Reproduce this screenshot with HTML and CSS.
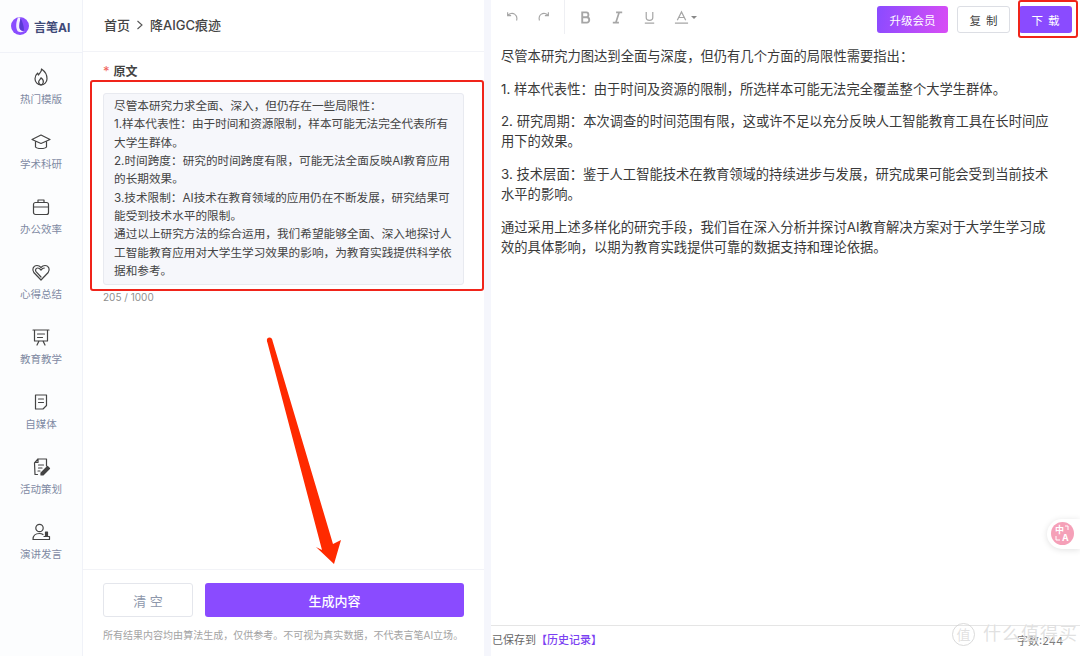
FILE: index.html
```html
<!DOCTYPE html>
<html lang="zh">
<head>
  <meta charset="UTF-8">
  <title>言笔AI | 降AIGC痕迹</title>
  <link rel="stylesheet" href="styles.css">
</head>
<body>
  <div class="app">

    <!-- Sidebar -->
    <aside class="sidebar">
      <div class="logo">
        <svg class="logo-mark" width="18" height="18" viewBox="0 0 18 18">
          <circle cx="9" cy="9" r="9" fill="#8a4dff"/>
          <path d="M7 0.500C5 5 4.500 10.500 6.500 14C8 15.500 11 15.500 14 14C11.500 14.500 9 13.500 8.500 11C8 8 9 4 9.500 0.500Z" fill="#f4eeff"/>
          <path d="M9.500 1C9 4.500 8 8 8.500 11C9 13 11 14 13 13.500C13 9 11.500 4.500 9.500 1Z" fill="#5b3ad6"/>
        </svg>
        <span class="logo-text">言笔AI</span>
      </div>
      <nav class="nav">
        <a class="nav-item">
          <svg width="20" height="20" viewBox="0 0 20 20" class="nav-icon"><path d="M10.500 2C11 5 8.500 6 7.500 8C7 7.200 6.800 6.700 6.700 6C5 7.500 4 9.500 4 11.700C4 15.300 6.700 18 10 18C13.300 18 16 15.300 16 11.700C16 8 13.500 4 10.500 2Z"/><path d="M10 18C8.300 17.500 7.500 16 7.700 14.500C8 13 9.500 12.300 10 10.800C11.500 12 12.700 13.500 12.300 15.300C12 16.700 11 17.700 10 18Z"/></svg>
          <span>热门模版</span>
        </a>
        <a class="nav-item">
          <svg width="20" height="20" viewBox="0 0 20 20" class="nav-icon"><path d="M10 3L19 7.500L10 11.500L1 7.500Z"/><path d="M4.500 9.500V15C6 17 14 17 15.500 15V9.500"/></svg>
          <span>学术科研</span>
        </a>
        <a class="nav-item">
          <svg width="20" height="20" viewBox="0 0 20 20" class="nav-icon"><rect x="2.500" y="5.500" width="15" height="12" rx="2"/><path d="M2.500 10H17.500M7 5.500V3H13V5.500"/></svg>
          <span>办公效率</span>
        </a>
        <a class="nav-item">
          <svg width="20" height="20" viewBox="0 0 20 20" class="nav-icon"><path d="M10 18L2.800 10.500C0.800 8 2 3.500 6 3.500C7.700 3.500 9 4.300 10 5.500C11 4.300 12.300 3.500 14 3.500C18 3.500 19.200 8 17.200 10.500Z"/><path d="M10 15L5 9.700C4 8.200 4.700 6 6.700 6C8 6 9 6.800 10 8C11 6.800 12 6 13.300 6"/></svg>
          <span>心得总结</span>
        </a>
        <a class="nav-item">
          <svg width="20" height="20" viewBox="0 0 20 20" class="nav-icon"><path d="M2 3H18M3.500 3V14H16.500V3M6.500 7H13.500M6.500 10.500H11.500M8 14L6 18M12 14L14 18"/></svg>
          <span>教育教学</span>
        </a>
        <a class="nav-item">
          <svg width="20" height="20" viewBox="0 0 20 20" class="nav-icon"><path d="M4.500 3H15.500V13.500L12 17H4.500ZM7.500 7H12.500M7.500 10.500H12.500"/></svg>
          <span>自媒体</span>
        </a>
        <a class="nav-item">
          <svg width="20" height="20" viewBox="0 0 20 20" class="nav-icon"><path d="M7 2H15.500V9M6.500 17.500H4L3.500 6L7 2V5.500H4M7.500 8H12.500M7.500 11H11M7 14H9"/><path class="nav-icon-fill" d="M16.500 9.500L18.500 11.500L12 18H10V16Z"/></svg>
          <span>活动策划</span>
        </a>
        <a class="nav-item">
          <svg width="20" height="20" viewBox="0 0 20 20" class="nav-icon"><circle cx="8.500" cy="6" r="3.700"/><path d="M2 17.500C2 13.500 4.500 11.500 8.500 11.500C10 11.500 11 11.800 12 12.500M2 17.500H18.500V14.500H13"/><path class="nav-icon-fill" d="M14.500 10H16.500V14.500H14.500Z"/></svg>
          <span>演讲发言</span>
        </a>
      </nav>
    </aside>

    <!-- Left panel -->
    <section class="form-panel">
      <header class="crumbs">
        <span>首页</span>
        <svg width="8" height="10" viewBox="0 0 8 10" class="crumb-sep"><path d="M1.500 1L6 5L1.500 9"/></svg>
        <span>降AIGC痕迹</span>
      </header>
      <div class="form-body">
        <label class="field-label"><i>*</i>原文</label>
        <div class="source-box">
          尽管本研究力求全面、深入，但仍存在一些局限性：<br>
          1.样本代表性：由于时间和资源限制，样本可能无法完全代表所有<br>
          大学生群体。<br>
          2.时间跨度：研究的时间跨度有限，可能无法全面反映AI教育应用<br>
          的长期效果。<br>
          3.技术限制：AI技术在教育领域的应用仍在不断发展，研究结果可<br>
          能受到技术水平的限制。<br>
          通过以上研究方法的综合运用，我们希望能够全面、深入地探讨人<br>
          工智能教育应用对大学生学习效果的影响，为教育实践提供科学依<br>
          据和参考。
        </div>
        <div class="counter">205 / 1000</div>
      </div>
      <footer class="form-foot">
        <div class="foot-buttons">
          <button class="btn-clear">清 空</button>
          <button class="btn-generate">生成内容</button>
        </div>
        <p class="disclaimer">所有结果内容均由算法生成，仅供参考。不可视为真实数据，不代表言笔AI立场。</p>
      </footer>
    </section>

    <!-- Right panel -->
    <section class="editor-panel">
      <div class="toolbar">
        <div class="tool-group history">
          <svg width="14" height="14" viewBox="0 0 16 16" class="tool-icon"><path d="M3 2.500V6.500H7M3.200 6.300C5 3.800 8.500 3 11 4.700C13.300 6.300 14 9.300 13.200 12"/></svg>
          <svg width="14" height="14" viewBox="0 0 16 16" class="tool-icon"><path d="M13 2.500V6.500H9M12.800 6.300C11 3.800 7.500 3 5 4.700C2.700 6.300 2 9.300 2.800 12"/></svg>
        </div>
        <div class="tool-group format">
          <svg width="15" height="15" viewBox="0 0 16 16" class="tool-icon bold"><path d="M4.500 2.500H9C11.800 2.500 11.800 7.700 9 7.700H4.500ZM4.500 7.700H9.500C12.800 7.700 12.800 13.500 9.500 13.500H4.500Z"/></svg>
          <svg width="15" height="15" viewBox="0 0 16 16" class="tool-icon"><path d="M6.500 2.500H13M3 13.500H9.500M9.800 2.500L6.200 13.500" stroke-width="1.800"/></svg>
          <svg width="15" height="15" viewBox="0 0 16 16" class="tool-icon"><path d="M4.500 2V8C4.500 12 11.500 12 11.500 8V2M3 14H13"/></svg>
          <div class="color-tool">
            <svg width="15" height="15" viewBox="0 0 16 16" class="tool-icon"><path d="M3.500 11L8 2L12.500 11M5.200 8H10.800M1 14H15"/></svg>
            <span class="caret"></span>
          </div>
        </div>
        <div class="actions">
          <button class="btn-vip">升级会员</button>
          <button class="btn-copy">复 制</button>
          <button class="btn-download">下 载</button>
        </div>
      </div>
      <article class="result">
        <p>尽管本研究力图达到全面与深度，但仍有几个方面的局限性需要指出：</p>
        <p>1. 样本代表性：由于时间及资源的限制，所选样本可能无法完全覆盖整个大学生群体。</p>
        <p>2. 研究周期：本次调查的时间范围有限，这或许不足以充分反映人工智能教育工具在长时间应用下的效果。</p>
        <p>3. 技术层面：鉴于人工智能技术在教育领域的持续进步与发展，研究成果可能会受到当前技术水平的影响。</p>
        <p>通过采用上述多样化的研究手段，我们旨在深入分析并探讨AI教育解决方案对于大学生学习成效的具体影响，以期为教育实践提供可靠的数据支持和理论依据。</p>
      </article>
      <footer class="editor-foot">
        <span class="saved">已保存到<a>【历史记录】</a></span>
        <span class="word-count">字数:244</span>
      </footer>
    </section>

    <!-- Floating translate button -->
    <div class="float-translate">
      <div class="float-circle">
        <span class="float-zh">中</span>
        <span class="float-en">A</span>
        <svg class="float-corners" width="23" height="23" viewBox="0 0 23 23"><path d="M14 4H17V8M5 14V18H9"/></svg>
      </div>
    </div>

    <!-- Annotations drawn on the screenshot -->
    <div class="mark mark-source"></div>
    <div class="mark mark-download"></div>
    <svg class="arrow" width="90" height="250" viewBox="0 0 90 250">
      <path d="M4 7L9 5L70 210L78 206L71 230L53 213L59 216Z" fill="#ff2a00"/>
      <circle cx="6.500" cy="6" r="2.600" fill="#ff2a00"/>
    </svg>

    <!-- Site watermark -->
    <div class="watermark"><span class="wm-badge">值</span><span>什么值得买</span></div>
  </div>
</body>
</html>
```

FILE: styles.css
```css
* {
  box-sizing: border-box;
}

html, body {
  margin: 0;
  padding: 0;
}

body {
  width: 1080px;
  height: 656px;
  overflow: hidden;
  font-family: "Inter", "Noto Sans CJK SC", sans-serif;
  color: #333;
  background: #f5f6fc;
}

.app {
  position: relative;
  display: flex;
  width: 1080px;
  height: 656px;
}

button {
  font-family: inherit;
  cursor: pointer;
}

/* Sidebar */
.sidebar {
  width: 83px;
  flex-shrink: 0;
  background: #fcfdfe;
  border-right: 1px solid #f0f2f8;
}

.logo {
  display: flex;
  align-items: center;
  height: 53px;
  padding-left: 11px;
  gap: 5px;
  border-bottom: 1px solid #f0f2f8;
}

.logo-text {
  font-size: 12px;
  font-weight: 700;
  color: #3f4a78;
}

.nav {
  display: flex;
  flex-direction: column;
  padding-top: 14px;
}

.nav-item {
  display: flex;
  flex-direction: column;
  align-items: center;
  height: 65px;
  gap: 6px;
  font-size: 10.500px;
  line-height: 14px;
  color: #7f8aa3;
}

.nav-icon {
  fill: none;
  stroke: #444;
  stroke-width: 1.200;
  stroke-linejoin: round;
  stroke-linecap: round;
}

.nav-icon-fill {
  fill: #444;
}

/* Left panel */
.form-panel {
  display: flex;
  flex-direction: column;
  width: 401px;
  flex-shrink: 0;
  background: #fff;
}

.crumbs {
  display: flex;
  align-items: center;
  height: 52px;
  padding: 0 0 2px 21px;
  gap: 6px;
  font-size: 13px;
  font-weight: 500;
  color: #444;
  border-bottom: 1px solid #f2f3f7;
}

.crumb-sep {
  fill: none;
  stroke: #555;
  stroke-width: 1.100;
}

.form-body {
  flex: 1;
  padding: 11px 20px 0;
}

.field-label {
  display: block;
  height: 30px;
  font-size: 12px;
  font-weight: 700;
  line-height: 16px;
  color: #444;
}

.field-label i {
  font-style: normal;
  font-weight: 400;
  font-size: 13px;
  color: #f0635c;
  margin-right: 4px;
}

.source-box {
  width: 361px;
  height: 192px;
  padding: 3px 10px;
  font-size: 11.650px;
  line-height: 18.350px;
  color: #444;
  background: #f6f7fb;
  border: 1px solid #e8eaf0;
  border-radius: 3px;
  white-space: nowrap;
}

.counter {
  margin-top: 6px;
  font-size: 10px;
  line-height: 13px;
  color: #8f8f8f;
}

.form-foot {
  height: 87px;
  padding: 13px 20px 0;
  border-top: 1px solid #f2f3f7;
}

.foot-buttons {
  display: flex;
  gap: 12px;
}

.btn-clear {
  width: 90px;
  height: 34px;
  padding: 0;
  font-size: 13px;
  color: #8d97ab;
  background: #fff;
  border: 1px solid #e4e6ec;
  border-radius: 3px;
}

.btn-generate {
  width: 259px;
  height: 34px;
  padding: 0;
  font-size: 13px;
  font-weight: 500;
  color: #fff;
  background: #8a4bff;
  border: none;
  border-radius: 3px;
}

.disclaimer {
  margin: 11px 0 0;
  font-size: 10.030px;
  line-height: 14px;
  color: #a3a3a3;
  white-space: nowrap;
}

/* Right panel */
.editor-panel {
  display: flex;
  flex-direction: column;
  width: 589px;
  margin-left: 7px;
  flex-shrink: 0;
  background: #fff;
}

.toolbar {
  display: flex;
  align-items: flex-start;
  height: 42px;
}

.tool-group {
  display: flex;
  align-items: center;
  height: 34px;
}

.history {
  gap: 18px;
  width: 74px;
  padding-left: 14px;
  border-right: 1px solid #eeeff3;
}

.format {
  gap: 17px;
  padding-left: 13px;
}

.tool-icon {
  fill: none;
  stroke: #a6a6a6;
  stroke-width: 1.300;
}

.tool-icon.bold {
  stroke-width: 2;
}

.color-tool {
  display: flex;
  align-items: center;
  gap: 2px;
}

.caret {
  border-left: 3px solid transparent;
  border-right: 3px solid transparent;
  border-top: 3px solid #888;
}

.actions {
  display: flex;
  margin-left: auto;
  padding-top: 6px;
  padding-right: 8px;
  gap: 9px;
}

.actions button {
  height: 27px;
  padding: 0;
  font-size: 11.500px;
  border-radius: 3px;
}

.btn-vip {
  width: 71px;
  color: #fff;
  background: linear-gradient(100deg, #8a4bff, #d94df5);
  border: none;
}

.btn-copy {
  width: 53px;
  color: #444;
  background: #fff;
  border: 1px solid #dcdee4;
  word-spacing: 2px;
}

.btn-download {
  width: 53px;
  color: #fff;
  background: #8a4bff;
  border: none;
  word-spacing: 2px;
}

.result {
  flex: 1;
  padding: 4px 29px 0 10px;
  font-size: 13.300px;
  line-height: 20px;
  color: #3a3a3a;
}

.result p {
  margin: 0 0 12.700px;
}

.editor-foot {
  display: flex;
  justify-content: space-between;
  height: 31px;
  padding: 6px 17px 0 1px;
  font-size: 11px;
  line-height: 16px;
  color: #666;
  border-top: 1px solid #e5e5e5;
}

.saved a {
  font-weight: 500;
  color: #7b3ff2;
}

.word-count {
  color: #777;
  font-size: 11px;
  padding-top: 1px;
}

/* Floating translate button */
.float-translate {
  position: absolute;
  top: 519px;
  right: 0;
  width: 33px;
  height: 30px;
  padding: 3px 0 0 4px;
  background: #fff;
  border-radius: 15px 0 0 15px;
  box-shadow: 0 1px 6px rgba(0, 0, 0, 0.12);
}

.float-circle {
  position: relative;
  width: 23px;
  height: 23px;
  color: #fff;
  background: #f5a0b8;
  border-radius: 50%;
}

.float-zh {
  position: absolute;
  left: 4px;
  top: 2px;
  font-size: 9px;
  font-weight: 700;
  line-height: 11px;
}

.float-en {
  position: absolute;
  left: 11px;
  top: 11px;
  font-size: 9px;
  font-weight: 700;
  line-height: 10px;
}

.float-corners {
  position: absolute;
  left: 0;
  top: 0;
  fill: none;
  stroke: #fff;
  stroke-width: 1;
}

/* Annotations */
.mark {
  position: absolute;
  border: 2px solid #f0241a;
  border-radius: 3px;
}

.mark-source {
  left: 90px;
  top: 80px;
  width: 394px;
  height: 211px;
}

.mark-download {
  left: 1018px;
  top: 0;
  width: 60px;
  height: 38px;
}

.arrow {
  position: absolute;
  left: 263px;
  top: 334px;
}

/* Watermark */
.watermark {
  position: absolute;
  left: 952px;
  top: 622px;
  display: flex;
  align-items: center;
  gap: 8px;
  font-size: 18px;
  line-height: 24px;
  letter-spacing: 1px;
  color: rgba(205, 205, 205, 0.6);
  text-shadow: 0 0 1px rgba(255, 255, 255, 0.9);
}

.wm-badge {
  width: 23px;
  height: 23px;
  font-size: 14px;
  line-height: 21px;
  letter-spacing: 0;
  text-align: center;
  border: 1px solid rgba(205, 205, 205, 0.75);
  border-radius: 50%;
}
```
